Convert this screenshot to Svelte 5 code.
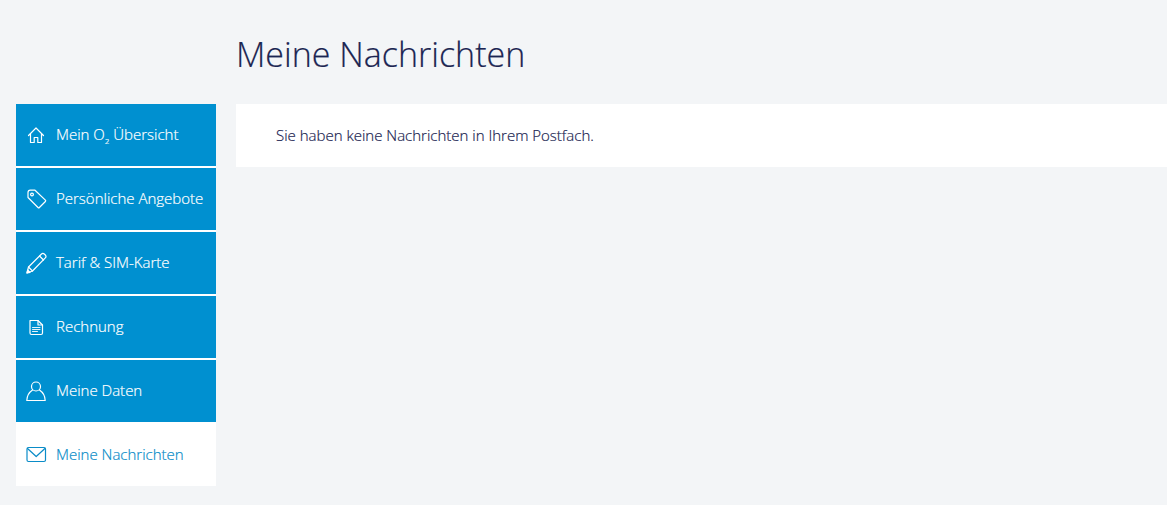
<script>
  const items = [
    { id: 'home', pre: 'Mein O', sub: '2', post: ' Übersicht' },
    { id: 'tag', pre: 'Persönliche Angebote' },
    { id: 'pen', pre: 'Tarif & SIM-Karte' },
    { id: 'doc', pre: 'Rechnung' },
    { id: 'user', pre: 'Meine Daten' },
    { id: 'mail', pre: 'Meine Nachrichten', active: true }
  ];
</script>

<div class="page">
  <nav class="sidebar">
    {#each items as item}
      <a class="item" class:active={item.active} href="#{item.id}">
        <span class="icon">
          <svg width="24" height="24" viewBox="0 0 24 24" fill="none" stroke="currentColor" stroke-width="1.2" stroke-linejoin="round" stroke-linecap="round">
            {#if item.id === 'home'}
              <path d="M4.500 12.500 12 5l7.500 7.500M6.500 11v8.500h3.700v-5h3.600v5h3.700V11" />
            {:else if item.id === 'tag'}
              <path d="M4 5.500v5l10 10a1 1 0 0 0 1.400 0l6-6a1 1 0 0 0 0-1.400L11 3.200H6.300A2.300 2.300 0 0 0 4 5.500z" />
              <circle cx="8" cy="7.500" r="1.400" />
            {:else if item.id === 'pen'}
              <path d="M3 22l1.500-6L17.500 3a2 2 0 0 1 2.800 0l1 1a2 2 0 0 1 0 2.800L8.500 20z" />
              <path d="M4.500 16 8.500 20M15.500 5l4 4" />
              <path d="M3 22l.7-3 2.300 2.300z" fill="currentColor" />
            {:else if item.id === 'doc'}
              <path d="M6 5.500h8l4.500 4.500V18a1.500 1.500 0 0 1-1.500 1.500H7.500A1.500 1.500 0 0 1 6 18z" />
              <path d="M14 5.500V10h4.500" />
              <path stroke-width="0.9" d="M8.500 12.500h7.500M8.500 14.500h7.500M8.500 16.500h5" />
            {:else if item.id === 'user'}
              <circle cx="12" cy="7.500" r="4.500" />
              <path d="M8.500 11C5.500 13 3 16.500 2.800 21.500h18.400C21 16.500 18.500 13 15.500 11" />
            {:else}
              <rect x="3" y="5.500" width="18.500" height="14" rx="1.500" />
              <path d="M3.500 6.500l8.700 8 8.700-8" />
            {/if}
          </svg>
        </span>
        <span class="label">{item.pre}{#if item.sub}<sub>{item.sub}</sub>{/if}{item.post ?? ''}</span>
      </a>
    {/each}
  </nav>

  <main class="content">
    <h1>Meine Nachrichten</h1>
    <div class="card">Sie haben keine Nachrichten in Ihrem Postfach.</div>
  </main>
</div>

<style>
  :global(body) {
    background: #f3f5f7;
    overflow: hidden;
  }

  .page {
    display: flex;
    gap: 20px;
    height: 505px;
    padding-left: 16px;
    font-family: "Open Sans", sans-serif;
    font-weight: 300;
    -webkit-text-stroke: 0.2px currentColor;
  }

  .sidebar {
    display: flex;
    flex-direction: column;
    width: 200px;
    flex-shrink: 0;
    padding-top: 104px;
  }

  .item {
    display: flex;
    align-items: center;
    height: 62px;
    margin-bottom: 2px;
    padding-left: 8px;
    background: #0090d0;
    color: #fff;
    font-size: 15px;
    text-decoration: none;
    box-shadow: 0 2px 0 #fff;
  }

  .item:nth-child(5) {
    margin-bottom: 0;
    box-shadow: none;
  }

  .item.active {
    height: 64px;
    margin-bottom: 0;
    background: #fff;
    color: #0a8cc8;
    box-shadow: none;
  }

  .icon {
    display: flex;
    width: 24px;
    margin-right: 8px;
  }

  .label {
    padding-bottom: 2px;
  }

  .active .label {
    padding-bottom: 0;
  }

  sub {
    font-size: 8px;
    line-height: 0;
  }

  .content {
    flex: 1;
  }

  h1 {
    margin: 0;
    height: 104px;
    padding-top: 31px;
    box-sizing: border-box;
    color: #1b2552;
    font-size: 34px;
    font-weight: 300;
    line-height: 46px;
  }

  .card {
    height: 63px;
    padding-left: 40px;
    background: #fff;
    color: #1b2552;
    font-size: 15px;
    line-height: 63px;
  }
</style>
